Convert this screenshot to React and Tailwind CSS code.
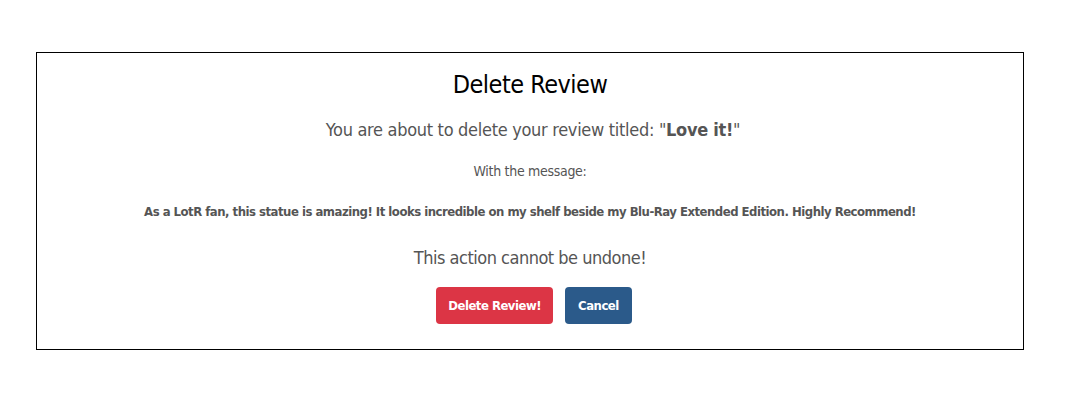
import React from 'react';

export default function App() {
  return (
    <div className="min-h-screen bg-white pt-[52px] font-['DejaVu_Sans_Condensed','Liberation_Sans',sans-serif]">
      <div className="ml-[36px] w-[988px] h-[298px] border border-black flex flex-col items-center pt-[14px]">
        <h1 className="text-[25px] leading-[36px] tracking-[-0.5px] text-black">Delete Review</h1>
        <p className="mt-[13px] ml-[6px] text-[18px] leading-[28px] tracking-[-0.3px] text-[#555]">
          You are about to delete your review titled: "<span className="font-bold">Love it!</span>"
        </p>
        <p className="mt-[17px] text-[14px] leading-[20px] tracking-[-0.3px] text-[#555]">With the message:</p>
        <p className="mt-[21px] text-[13px] leading-[20px] tracking-[-0.5px] font-bold text-[#555]">
          As a LotR fan, this statue is amazing! It looks incredible on my shelf beside my Blu-Ray Extended Edition. Highly Recommend!
        </p>
        <p className="mt-[22px] text-[18px] leading-[28px] tracking-[-0.5px] text-[#555]">This action cannot be undone!</p>
        <div className="mt-[15px] ml-[8px] flex gap-[12px]">
          <button className="h-[37px] px-[12px] rounded bg-[#dc3545] text-white text-[13px] tracking-[-0.5px] font-bold">
            Delete Review!
          </button>
          <button className="h-[37px] px-[13px] rounded bg-[#2b5a8a] text-white text-[13px] tracking-[-0.5px] font-bold">
            Cancel
          </button>
        </div>
      </div>
    </div>
  );
}
